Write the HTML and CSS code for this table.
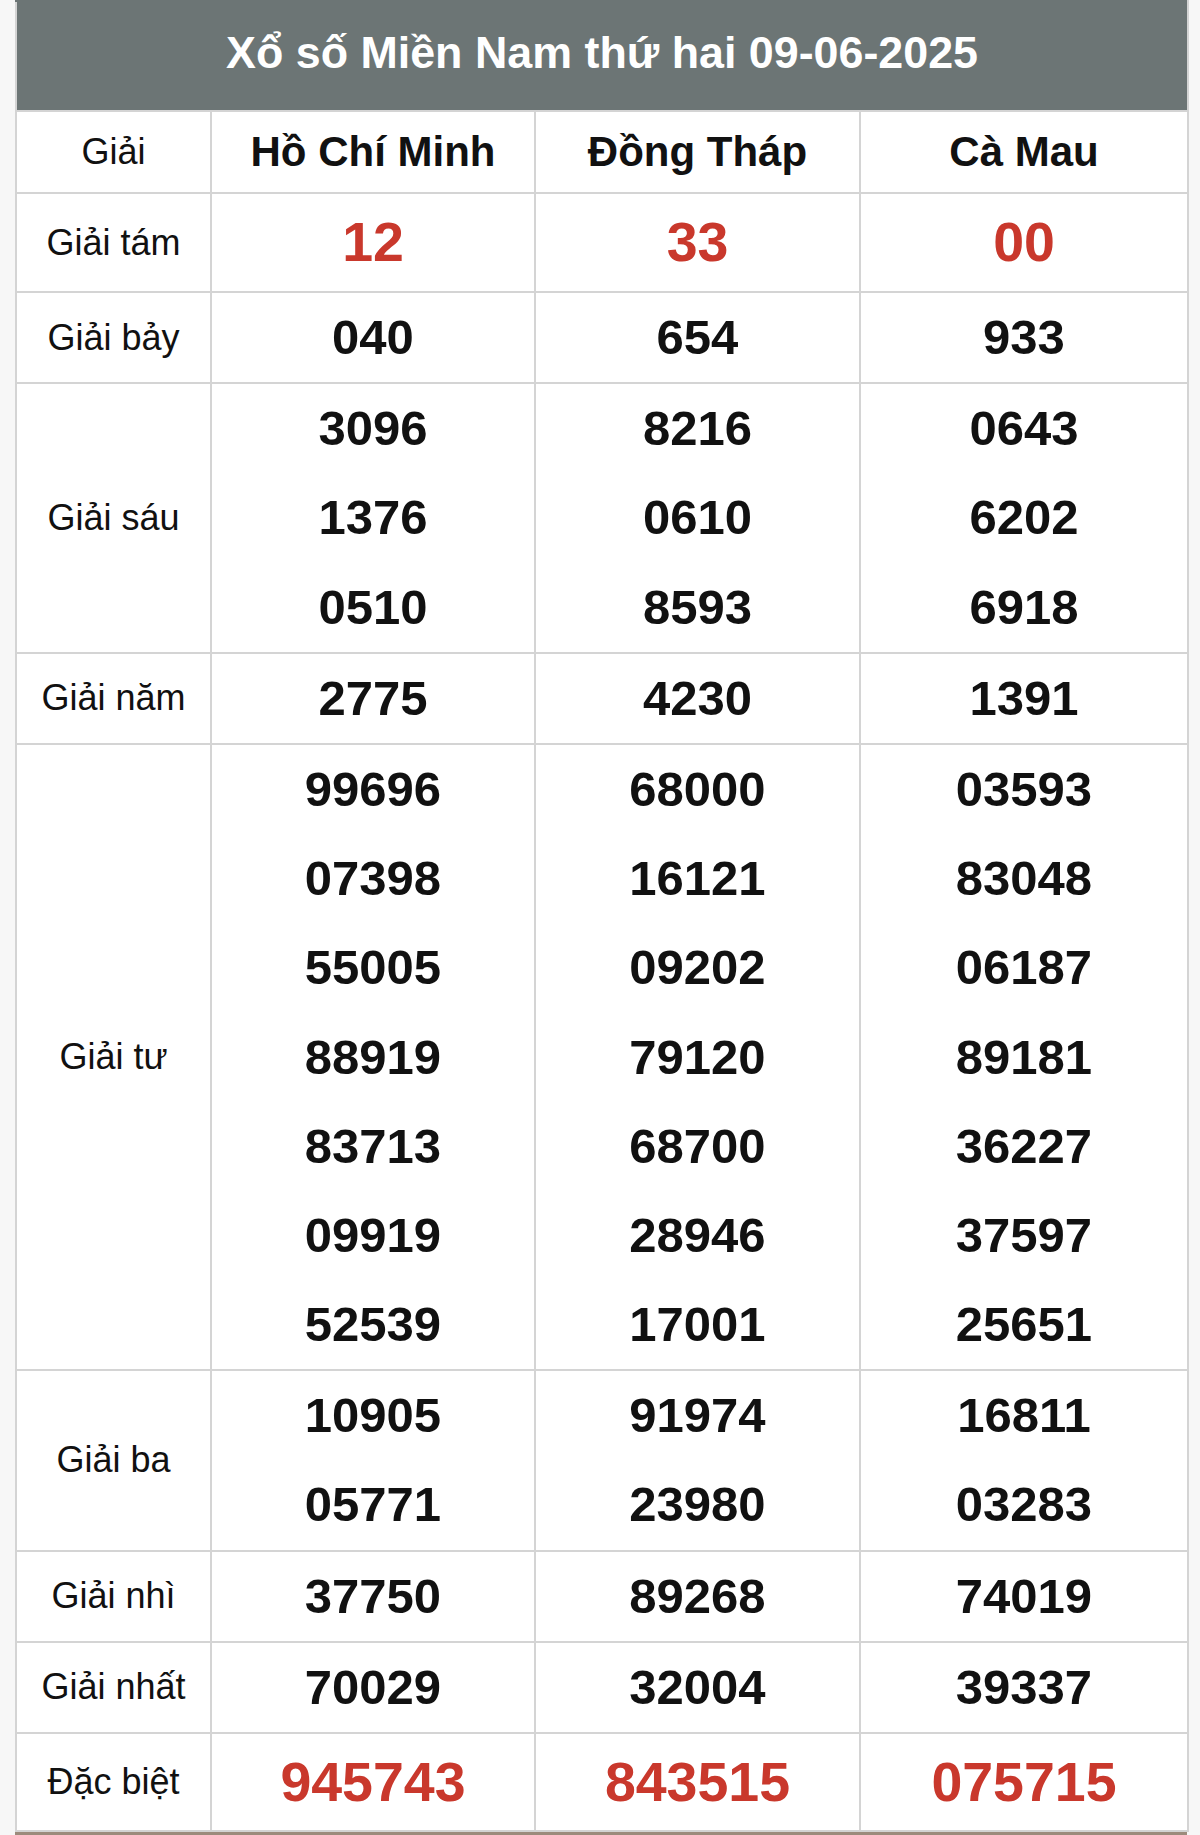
FILE: index.html
```html
<!DOCTYPE html>
<html lang="vi">
<head>
<meta charset="utf-8">
<title>Xổ số Miền Nam thứ hai 09-06-2025</title>
<link rel="stylesheet" href="styles.css">
</head>
<body>
<div class="wrap">
<table class="kq">
  <colgroup>
    <col class="c-label">
    <col class="c-prov1">
    <col class="c-prov2">
    <col class="c-prov3">
  </colgroup>
  <thead>
    <tr><th class="title" colspan="4">Xổ số Miền Nam thứ hai 09-06-2025</th></tr>
    <tr class="head">
      <td class="label">Giải</td>
      <th class="prov">Hồ Chí Minh</th>
      <th class="prov">Đồng Tháp</th>
      <th class="prov">Cà Mau</th>
    </tr>
  </thead>
  <tbody>
    <tr class="big">
      <td class="label">Giải tám</td>
      <td class="num red"><div>12</div></td>
      <td class="num red"><div>33</div></td>
      <td class="num red"><div>00</div></td>
    </tr>
    <tr>
      <td class="label">Giải bảy</td>
      <td class="num"><div>040</div></td>
      <td class="num"><div>654</div></td>
      <td class="num"><div>933</div></td>
    </tr>
    <tr>
      <td class="label">Giải sáu</td>
      <td class="num"><div>3096</div><div>1376</div><div>0510</div></td>
      <td class="num"><div>8216</div><div>0610</div><div>8593</div></td>
      <td class="num"><div>0643</div><div>6202</div><div>6918</div></td>
    </tr>
    <tr>
      <td class="label">Giải năm</td>
      <td class="num"><div>2775</div></td>
      <td class="num"><div>4230</div></td>
      <td class="num"><div>1391</div></td>
    </tr>
    <tr>
      <td class="label">Giải tư</td>
      <td class="num"><div>99696</div><div>07398</div><div>55005</div><div>88919</div><div>83713</div><div>09919</div><div>52539</div></td>
      <td class="num"><div>68000</div><div>16121</div><div>09202</div><div>79120</div><div>68700</div><div>28946</div><div>17001</div></td>
      <td class="num"><div>03593</div><div>83048</div><div>06187</div><div>89181</div><div>36227</div><div>37597</div><div>25651</div></td>
    </tr>
    <tr>
      <td class="label">Giải ba</td>
      <td class="num"><div>10905</div><div>05771</div></td>
      <td class="num"><div>91974</div><div>23980</div></td>
      <td class="num"><div>16811</div><div>03283</div></td>
    </tr>
    <tr>
      <td class="label">Giải nhì</td>
      <td class="num"><div>37750</div></td>
      <td class="num"><div>89268</div></td>
      <td class="num"><div>74019</div></td>
    </tr>
    <tr>
      <td class="label">Giải nhất</td>
      <td class="num"><div>70029</div></td>
      <td class="num"><div>32004</div></td>
      <td class="num"><div>39337</div></td>
    </tr>
    <tr class="special">
      <td class="label">Đặc biệt</td>
      <td class="num red"><div>945743</div></td>
      <td class="num red"><div>843515</div></td>
      <td class="num red"><div>075715</div></td>
    </tr>
  </tbody>
</table>
<div class="edge"></div>
</div>
</body>
</html>
```

FILE: styles.css
```css
html, body {
  margin: 0;
  padding: 0;
  background: #f7f7f7;
}

body {
  font-family: "Liberation Sans", Arial, Helvetica, sans-serif;
  color: #111;
}

.wrap {
  width: 1172px;
  margin-left: 15px;
}

.kq {
  width: 1172px;
  border-collapse: collapse;
  table-layout: fixed;
  background: #fff;
}

.c-label { width: 195px; }
.c-prov1 { width: 324px; }
.c-prov2 { width: 325px; }
.c-prov3 { width: 328px; }

.kq td,
.kq th {
  border: 2px solid #d4d4d4;
  padding: 0;
  text-align: center;
  vertical-align: middle;
}

.kq th.title {
  background: #6c7575;
  color: #fff;
  font-size: 44.8px;
  font-weight: bold;
  line-height: 100px;
  height: 108px;
  vertical-align: top;
  border-top-color: #6c7575;
  border-left-color: #d4d4d4;
  border-right-color: #d4d4d4;
}

.head td,
.head th {
  height: 80px;
}

.label {
  font-size: 36px;
  font-weight: normal;
  color: #111;
}

.prov {
  font-size: 42px;
  font-weight: bold;
  color: #111;
}

.num {
  font-weight: bold;
  font-size: 49px;
}

.num div {
  line-height: 89.2px;
  height: 89.2px;
}

.big .num div {
  line-height: 97px;
  height: 97px;
}

.special .num div {
  line-height: 96px;
  height: 96px;
}

.red {
  color: #c9382c;
}

.num.red {
  font-size: 55.5px;
}

.edge {
  height: 3px;
  background: #9c8b7c;
}
```
